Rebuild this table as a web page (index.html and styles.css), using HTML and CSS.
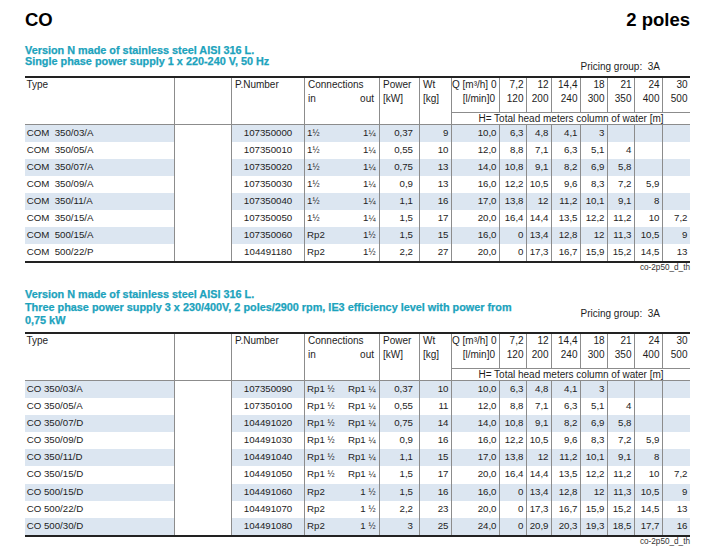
FILE: index.html
```html
<!DOCTYPE html>
<html lang="en">
<head>
<meta charset="utf-8">
<title>CO 2 poles</title>
<link rel="stylesheet" href="styles.css">
</head>
<body>
<div class="page">
  <header class="title-row">
    <h1 class="title">CO</h1>
    <div class="title">2 poles</div>
  </header>

  <section class="block block-1">
    <div class="block-head">
      <h2 class="subtitle">Version N made of stainless steel AISI 316 L.<br>Single phase power supply 1 x 220-240 V, 50 Hz</h2>
      <div class="pricing">Pricing group:&nbsp; 3A</div>
    </div>
    <div class="table-wrap">
      <table class="data t1">
        <colgroup>
          <col class="w-type"><col class="w-blank"><col class="w-pn"><col class="w-in"><col class="w-out"><col class="w-pw"><col class="w-wt"><col class="w-q0"><col class="w-27"><col class="w-25"><col class="w-29"><col class="w-27"><col class="w-27"><col class="w-28"><col class="w-28">
        </colgroup>
        <thead>
          <tr class="hA">
            <th rowspan="3" class="h-type">Type</th>
            <th rowspan="3" class="bl"></th>
            <th rowspan="3" class="bl">P.Number</th>
            <th colspan="2" class="bl">Connections</th>
            <th class="bl">Power</th>
            <th class="bl">Wt</th>
            <th class="bl h-q0">Q [m³/h] 0</th>
            <th class="bl h-q">7,2</th><th class="bl h-q">12</th><th class="bl h-q">14,4</th><th class="bl h-q">18</th><th class="bl h-q">21</th><th class="bl h-q">24</th><th class="bl h-q">30</th>
          </tr>
          <tr class="hB">
            <th rowspan="2" class="bl">in</th>
            <th rowspan="2" class="h-out">out</th>
            <th rowspan="2" class="bl">[kW]</th>
            <th rowspan="2" class="bl">[kg]</th>
            <th class="bl h-q0">[l/min]0</th>
            <th class="bl h-q">120</th><th class="bl h-q">200</th><th class="bl h-q">240</th><th class="bl h-q">300</th><th class="bl h-q">350</th><th class="bl h-q">400</th><th class="bl h-q">500</th>
          </tr>
          <tr class="hC">
            <th colspan="8" class="bl h-h">H= Total head meters column of water [m]</th>
          </tr>
        </thead>
        <tbody>
          <tr><td class="c-type">COM&nbsp; 350/03/A</td><td class="c-blank"></td><td class="c-pn">107350000</td><td class="c-in">1<span class="fr">½</span></td><td class="c-out">1<span class="fr">¼</span></td><td class="c-pw">0,37</td><td class="c-n">9</td><td class="c-n">10,0</td><td class="c-n">6,3</td><td class="c-n">4,8</td><td class="c-n">4,1</td><td class="c-n">3</td><td class="c-n"></td><td class="c-n"></td><td class="c-n"></td></tr>
          <tr><td class="c-type">COM&nbsp; 350/05/A</td><td class="c-blank"></td><td class="c-pn">107350010</td><td class="c-in">1<span class="fr">½</span></td><td class="c-out">1<span class="fr">¼</span></td><td class="c-pw">0,55</td><td class="c-n">10</td><td class="c-n">12,0</td><td class="c-n">8,8</td><td class="c-n">7,1</td><td class="c-n">6,3</td><td class="c-n">5,1</td><td class="c-n">4</td><td class="c-n"></td><td class="c-n"></td></tr>
          <tr><td class="c-type">COM&nbsp; 350/07/A</td><td class="c-blank"></td><td class="c-pn">107350020</td><td class="c-in">1<span class="fr">½</span></td><td class="c-out">1<span class="fr">¼</span></td><td class="c-pw">0,75</td><td class="c-n">13</td><td class="c-n">14,0</td><td class="c-n">10,8</td><td class="c-n">9,1</td><td class="c-n">8,2</td><td class="c-n">6,9</td><td class="c-n">5,8</td><td class="c-n"></td><td class="c-n"></td></tr>
          <tr><td class="c-type">COM&nbsp; 350/09/A</td><td class="c-blank"></td><td class="c-pn">107350030</td><td class="c-in">1<span class="fr">½</span></td><td class="c-out">1<span class="fr">¼</span></td><td class="c-pw">0,9</td><td class="c-n">13</td><td class="c-n">16,0</td><td class="c-n">12,2</td><td class="c-n">10,5</td><td class="c-n">9,6</td><td class="c-n">8,3</td><td class="c-n">7,2</td><td class="c-n">5,9</td><td class="c-n"></td></tr>
          <tr><td class="c-type">COM&nbsp; 350/11/A</td><td class="c-blank"></td><td class="c-pn">107350040</td><td class="c-in">1<span class="fr">½</span></td><td class="c-out">1<span class="fr">¼</span></td><td class="c-pw">1,1</td><td class="c-n">16</td><td class="c-n">17,0</td><td class="c-n">13,8</td><td class="c-n">12</td><td class="c-n">11,2</td><td class="c-n">10,1</td><td class="c-n">9,1</td><td class="c-n">8</td><td class="c-n"></td></tr>
          <tr><td class="c-type">COM&nbsp; 350/15/A</td><td class="c-blank"></td><td class="c-pn">107350050</td><td class="c-in">1<span class="fr">½</span></td><td class="c-out">1<span class="fr">¼</span></td><td class="c-pw">1,5</td><td class="c-n">17</td><td class="c-n">20,0</td><td class="c-n">16,4</td><td class="c-n">14,4</td><td class="c-n">13,5</td><td class="c-n">12,2</td><td class="c-n">11,2</td><td class="c-n">10</td><td class="c-n">7,2</td></tr>
          <tr><td class="c-type">COM&nbsp; 500/15/A</td><td class="c-blank"></td><td class="c-pn">107350060</td><td class="c-in">Rp2</td><td class="c-out">1<span class="fr">½</span></td><td class="c-pw">1,5</td><td class="c-n">15</td><td class="c-n">16,0</td><td class="c-n">0</td><td class="c-n">13,4</td><td class="c-n">12,8</td><td class="c-n">12</td><td class="c-n">11,3</td><td class="c-n">10,5</td><td class="c-n">9</td></tr>
          <tr><td class="c-type">COM&nbsp; 500/22/P</td><td class="c-blank"></td><td class="c-pn">104491180</td><td class="c-in">Rp2</td><td class="c-out">1<span class="fr">½</span></td><td class="c-pw">2,2</td><td class="c-n">27</td><td class="c-n">20,0</td><td class="c-n">0</td><td class="c-n">17,3</td><td class="c-n">16,7</td><td class="c-n">15,9</td><td class="c-n">15,2</td><td class="c-n">14,5</td><td class="c-n">13</td></tr>
        </tbody>
      </table>
    </div>
    <div class="code">co-2p50_d_th</div>
  </section>

  <section class="block block-2">
    <div class="block-head">
      <h2 class="subtitle">Version N made of stainless steel AISI 316 L.<br>Three phase power supply 3 x 230/400V, 2 poles/2900 rpm, IE3 efficiency level with power from<br>0,75 kW</h2>
      <div class="pricing">Pricing group:&nbsp; 3A</div>
    </div>
    <div class="table-wrap">
      <table class="data t2">
        <colgroup>
          <col class="w-type"><col class="w-blank"><col class="w-pn"><col class="w-in"><col class="w-out"><col class="w-pw"><col class="w-wt"><col class="w-q0"><col class="w-27"><col class="w-25"><col class="w-29"><col class="w-27"><col class="w-27"><col class="w-28"><col class="w-28">
        </colgroup>
        <thead>
          <tr class="hA">
            <th rowspan="3" class="h-type">Type</th>
            <th rowspan="3" class="bl"></th>
            <th rowspan="3" class="bl">P.Number</th>
            <th colspan="2" class="bl">Connections</th>
            <th class="bl">Power</th>
            <th class="bl">Wt</th>
            <th class="bl h-q0">Q [m³/h] 0</th>
            <th class="bl h-q">7,2</th><th class="bl h-q">12</th><th class="bl h-q">14,4</th><th class="bl h-q">18</th><th class="bl h-q">21</th><th class="bl h-q">24</th><th class="bl h-q">30</th>
          </tr>
          <tr class="hB">
            <th rowspan="2" class="bl">in</th>
            <th rowspan="2" class="h-out">out</th>
            <th rowspan="2" class="bl">[kW]</th>
            <th rowspan="2" class="bl">[kg]</th>
            <th class="bl h-q0">[l/min]0</th>
            <th class="bl h-q">120</th><th class="bl h-q">200</th><th class="bl h-q">240</th><th class="bl h-q">300</th><th class="bl h-q">350</th><th class="bl h-q">400</th><th class="bl h-q">500</th>
          </tr>
          <tr class="hC">
            <th colspan="8" class="bl h-h">H= Total head meters column of water [m]</th>
          </tr>
        </thead>
        <tbody>
          <tr><td class="c-type">CO 350/03/A</td><td class="c-blank"></td><td class="c-pn">107350090</td><td class="c-in">Rp1 <span class="fr">½</span></td><td class="c-out">Rp1 <span class="fr">¼</span></td><td class="c-pw">0,37</td><td class="c-n">10</td><td class="c-n">10,0</td><td class="c-n">6,3</td><td class="c-n">4,8</td><td class="c-n">4,1</td><td class="c-n">3</td><td class="c-n"></td><td class="c-n"></td><td class="c-n"></td></tr>
          <tr><td class="c-type">CO 350/05/A</td><td class="c-blank"></td><td class="c-pn">107350100</td><td class="c-in">Rp1 <span class="fr">½</span></td><td class="c-out">Rp1 <span class="fr">¼</span></td><td class="c-pw">0,55</td><td class="c-n">11</td><td class="c-n">12,0</td><td class="c-n">8,8</td><td class="c-n">7,1</td><td class="c-n">6,3</td><td class="c-n">5,1</td><td class="c-n">4</td><td class="c-n"></td><td class="c-n"></td></tr>
          <tr><td class="c-type">CO 350/07/D</td><td class="c-blank"></td><td class="c-pn">104491020</td><td class="c-in">Rp1 <span class="fr">½</span></td><td class="c-out">Rp1 <span class="fr">¼</span></td><td class="c-pw">0,75</td><td class="c-n">14</td><td class="c-n">14,0</td><td class="c-n">10,8</td><td class="c-n">9,1</td><td class="c-n">8,2</td><td class="c-n">6,9</td><td class="c-n">5,8</td><td class="c-n"></td><td class="c-n"></td></tr>
          <tr><td class="c-type">CO 350/09/D</td><td class="c-blank"></td><td class="c-pn">104491030</td><td class="c-in">Rp1 <span class="fr">½</span></td><td class="c-out">Rp1 <span class="fr">¼</span></td><td class="c-pw">0,9</td><td class="c-n">16</td><td class="c-n">16,0</td><td class="c-n">12,2</td><td class="c-n">10,5</td><td class="c-n">9,6</td><td class="c-n">8,3</td><td class="c-n">7,2</td><td class="c-n">5,9</td><td class="c-n"></td></tr>
          <tr><td class="c-type">CO 350/11/D</td><td class="c-blank"></td><td class="c-pn">104491040</td><td class="c-in">Rp1 <span class="fr">½</span></td><td class="c-out">Rp1 <span class="fr">¼</span></td><td class="c-pw">1,1</td><td class="c-n">15</td><td class="c-n">17,0</td><td class="c-n">13,8</td><td class="c-n">12</td><td class="c-n">11,2</td><td class="c-n">10,1</td><td class="c-n">9,1</td><td class="c-n">8</td><td class="c-n"></td></tr>
          <tr><td class="c-type">CO 350/15/D</td><td class="c-blank"></td><td class="c-pn">104491050</td><td class="c-in">Rp1 <span class="fr">½</span></td><td class="c-out">Rp1 <span class="fr">¼</span></td><td class="c-pw">1,5</td><td class="c-n">17</td><td class="c-n">20,0</td><td class="c-n">16,4</td><td class="c-n">14,4</td><td class="c-n">13,5</td><td class="c-n">12,2</td><td class="c-n">11,2</td><td class="c-n">10</td><td class="c-n">7,2</td></tr>
          <tr><td class="c-type">CO 500/15/D</td><td class="c-blank"></td><td class="c-pn">104491060</td><td class="c-in">Rp2</td><td class="c-out">1 <span class="fr">½</span></td><td class="c-pw">1,5</td><td class="c-n">16</td><td class="c-n">16,0</td><td class="c-n">0</td><td class="c-n">13,4</td><td class="c-n">12,8</td><td class="c-n">12</td><td class="c-n">11,3</td><td class="c-n">10,5</td><td class="c-n">9</td></tr>
          <tr><td class="c-type">CO 500/22/D</td><td class="c-blank"></td><td class="c-pn">104491070</td><td class="c-in">Rp2</td><td class="c-out">1 <span class="fr">½</span></td><td class="c-pw">2,2</td><td class="c-n">23</td><td class="c-n">20,0</td><td class="c-n">0</td><td class="c-n">17,3</td><td class="c-n">16,7</td><td class="c-n">15,9</td><td class="c-n">15,2</td><td class="c-n">14,5</td><td class="c-n">13</td></tr>
          <tr><td class="c-type">CO 500/30/D</td><td class="c-blank"></td><td class="c-pn">104491080</td><td class="c-in">Rp2</td><td class="c-out">1 <span class="fr">½</span></td><td class="c-pw">3</td><td class="c-n">25</td><td class="c-n">24,0</td><td class="c-n">0</td><td class="c-n">20,9</td><td class="c-n">20,3</td><td class="c-n">19,3</td><td class="c-n">18,5</td><td class="c-n">17,7</td><td class="c-n">16</td></tr>
        </tbody>
      </table>
    </div>
    <div class="code">co-2p50_d_th</div>
  </section>
</div>
</body>
</html>
```
FILE: styles.css
```css
* {
  box-sizing: border-box;
  margin: 0;
  padding: 0;
}

body {
  background: #ffffff;
  font-family: "Liberation Sans", Arial, Helvetica, sans-serif;
  color: #1d1d1d;
}

.page {
  width: 665px;
  margin-left: 25px;
  padding-top: 9px;
}

.title-row {
  display: flex;
  justify-content: space-between;
  align-items: baseline;
}

.title {
  font-size: 18.5px;
  line-height: 22px;
  font-weight: bold;
  color: #000000;
}

.block-1 { margin-top: 13.7px; }
.block-2 { margin-top: 15.4px; }

.block-head {
  display: flex;
  justify-content: space-between;
  align-items: flex-start;
}

.block-1 .block-head { margin-bottom: 2.6px; }
.block-2 .block-head { margin-bottom: 5.2px; }

.subtitle {
  font-size: 10.85px;
  font-weight: bold;
  color: #1ca3bd;
  white-space: nowrap;
  -webkit-text-stroke: 0.25px #1ca3bd;
}

.block-1 .subtitle { line-height: 11.7px; }
.block-2 .subtitle { line-height: 12.8px; }

.pricing {
  font-size: 10px;
  line-height: 12px;
  margin-right: 30px;
  white-space: nowrap;
  color: #1d1d1d;
}

.block-1 .pricing { margin-top: 16.7px; }
.block-2 .pricing { margin-top: 19.3px; }

.table-wrap {
  border-top: 2px solid #222222;
  border-bottom: 2px solid #222222;
}

.data {
  width: 665px;
  table-layout: fixed;
  border-collapse: separate;
  border-spacing: 0;
}

.w-type { width: 149px; }
.w-blank { width: 57px; }
.w-pn { width: 73px; }
.w-in { width: 37px; }
.w-out { width: 38px; }
.w-pw { width: 40px; }
.w-wt { width: 32px; }
.w-q0 { width: 48px; }
.w-25 { width: 25px; }
.w-27 { width: 27px; }
.w-28 { width: 28px; }
.w-29 { width: 29px; }

/* header */
.data th {
  font-weight: normal;
  font-size: 10px;
  line-height: 14px;
  text-align: left;
  vertical-align: top;
  padding: 0 0 0 3px;
  white-space: nowrap;
  color: #1d1d1d;
}

.data th.bl { border-left: 1px solid #8c8c8c; }
.data th.h-type { padding-left: 1.5px; }

.data th[rowspan],
.data th.h-h { border-bottom: 1px solid #8c8c8c; }

.data th.h-out {
  text-align: right;
  padding: 0 5px 0 0;
}

.data th.h-q0 {
  text-align: right;
  padding: 0 4px 0 0;
}

.data th.h-q {
  text-align: right;
  padding: 0 2.5px 0 0;
}

.hB th.h-q0,
.hB th.h-q { padding-bottom: 6px; }

.data th.h-h {
  border-top: 1px solid #8c8c8c;
  line-height: 11px;
  text-align: center;
  padding: 0;
}

/* body */
.data td {
  font-size: 9.7px;
  line-height: 16px;
  height: 17px;
  padding: 0 0 1px 0;
  white-space: nowrap;
  overflow: hidden;
  border-left: 1px solid #8c8c8c;
}

.t2 td {
  line-height: 16.1px;
  height: 17.1px;
}

.data tbody tr:nth-child(odd) td { background: #dce6f1; }
.data tbody tr td.c-blank { background: #ffffff; }

.data td.c-type {
  border-left: 0;
  padding-left: 1.7px;
}

.data td.c-pn { text-align: center; }
.data td.c-in { padding-left: 2px; }

.data td.c-out {
  border-left: 0;
  text-align: right;
  padding-right: 3.5px;
}

.data td.c-pw {
  text-align: right;
  padding-right: 6px;
}

.data td.c-n {
  text-align: right;
  padding-right: 2.5px;
}

.fr {
  font-size: 8.5px;
  line-height: 0;
}

.code {
  text-align: right;
  font-size: 8.2px;
  line-height: 10px;
  color: #333333;
}
```
